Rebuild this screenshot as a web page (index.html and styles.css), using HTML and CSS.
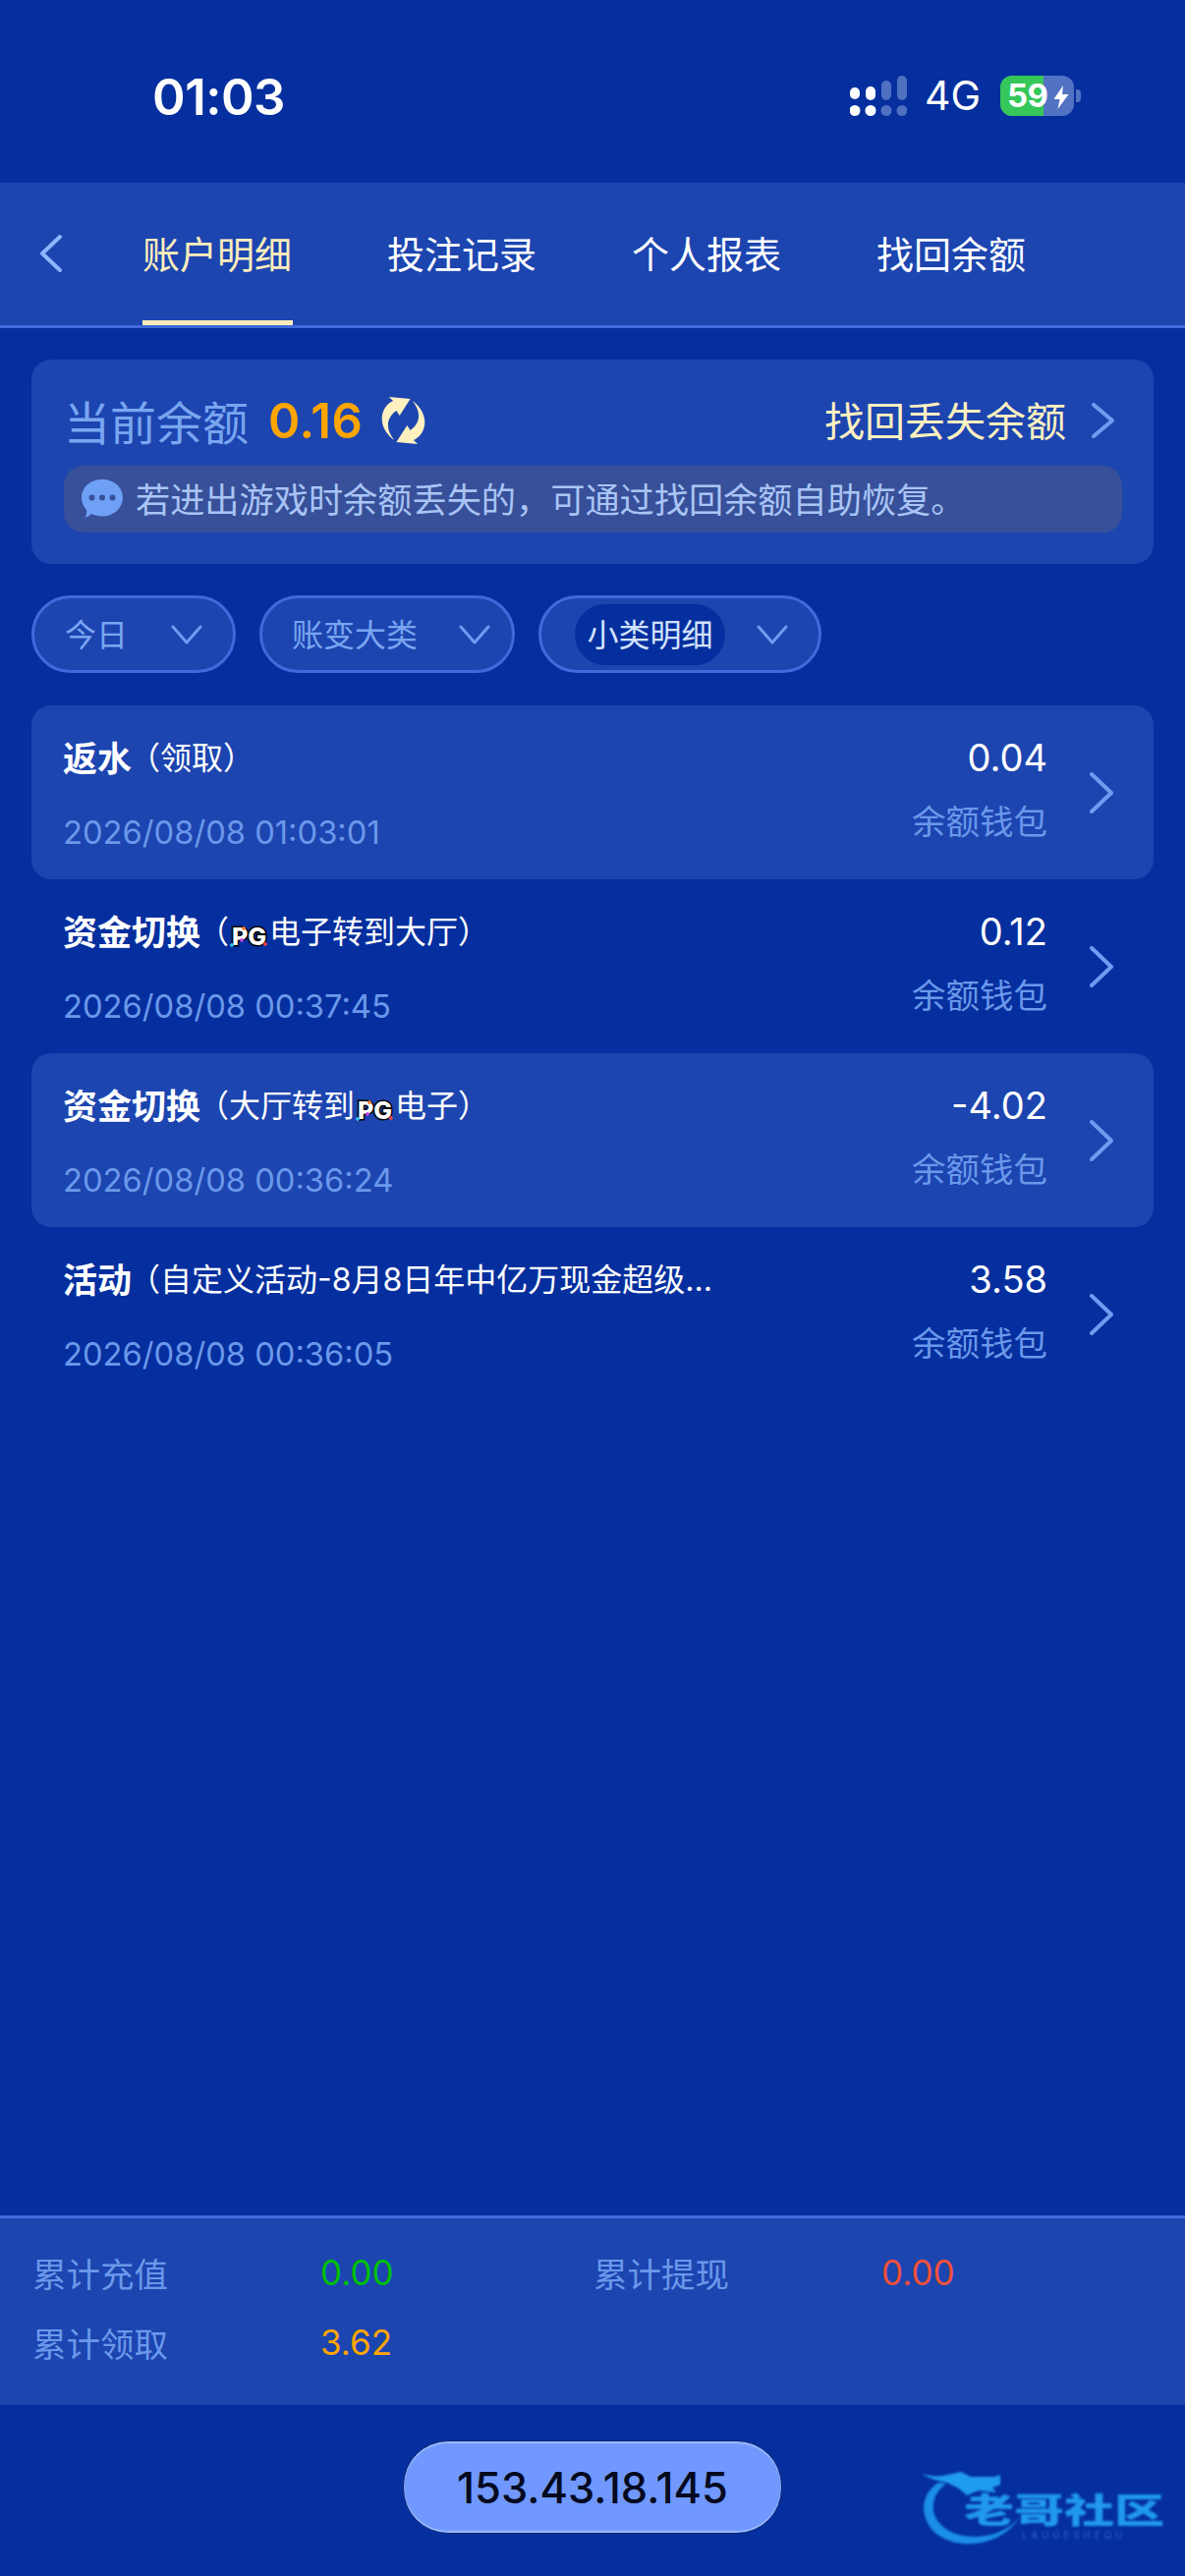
FILE: index.html
```html
<!DOCTYPE html>
<html lang="zh-CN">
<head>
  <meta charset="UTF-8" />
  <meta name="viewport" content="width=device-width, initial-scale=1.0" />
  <title>账户明细</title>
  <link rel="stylesheet" href="styles.css">
</head>
<body>
<div class="page">
  <div class="status-bar">
    <span class="time">01:03</span>
    <div class="status-right">
      <svg class="signal" width="58" height="41" viewBox="0 0 58 41">
        <rect x="0" y="12" width="10" height="12" rx="5" fill="#fff"/>
        <rect x="16" y="11" width="10" height="14" rx="5" fill="#fff"/>
        <rect x="32" y="5" width="10" height="20" rx="5" fill="#4f70c0"/>
        <rect x="48" y="0" width="10" height="25" rx="5" fill="#4f70c0"/>
        <circle cx="5" cy="35.5" r="5.5" fill="#fff"/>
        <circle cx="21" cy="35.5" r="5.5" fill="#fff"/>
        <circle cx="37" cy="35.5" r="5.5" fill="#4f70c0"/>
        <circle cx="53" cy="35.5" r="5.5" fill="#4f70c0"/>
      </svg>
      <span class="network">4G</span>
      <div class="battery">
        <div class="battery-fill"></div>
        <span class="battery-num">59</span>
        <svg class="bolt" width="16" height="24" viewBox="0 0 15 24">
          <path d="M9.5 0 L0 14 H6 L4 24 L15 9 H8.5 Z" fill="#fff"/>
        </svg>
      </div>
      <div class="battery-nub"></div>
    </div>
  </div>

  <div class="tabs">
    <svg class="back" width="23" height="38" viewBox="0 0 23 38">
      <path d="M21 2 L3 19 L21 36" fill="none" stroke="#8db6ff" stroke-width="4" stroke-linecap="round" stroke-linejoin="round"/>
    </svg>
    <div class="tab tab-active">账户明细</div>
    <div class="tab">投注记录</div>
    <div class="tab">个人报表</div>
    <div class="tab">找回余额</div>
  </div>

  <div class="content">
    <div class="balance-card">
      <div class="balance-head">
        <span class="balance-label">当前余额</span>
        <span class="balance-value">0.16</span>
        <svg class="refresh" width="47" height="48" viewBox="2 0 43 48" preserveAspectRatio="none">
          <path d="M14 4 C3 9 -3 29 15 44 C7 33 7 22 17 14 L20 19 L30 2 L10 0 Z" fill="#fff0c0"/>
          <path d="M14 4 C3 9 -3 29 15 44 C7 33 7 22 17 14 L20 19 L30 2 L10 0 Z" fill="#fff0c0" transform="rotate(180 23.5 24)"/>
        </svg>
        <span class="recover-link">找回丢失余额</span>
        <svg class="chevron" width="25" height="36" viewBox="0 0 25 36">
          <path d="M3 2 L22 18 L3 34" fill="none" stroke="#6e9cf0" stroke-width="4" stroke-linecap="round" stroke-linejoin="round"/>
        </svg>
      </div>
      <div class="notice">
        <svg class="chat" width="42" height="40" viewBox="0 0 42 40">
          <path d="M21 0 C33 0 42 8 42 18.5 C42 29 33 37.5 21 37.5 C17 37.5 13 36.5 10 35 C8 37 6 38.5 3.5 38.5 C5 36 5.5 33.5 5 31 C2 27.5 0 23.5 0 18.5 C0 8 9 0 21 0 Z" fill="#6ea0f5"/>
          <circle cx="10.5" cy="18.5" r="3" fill="#375099"/>
          <circle cx="21" cy="18.5" r="3" fill="#375099"/>
          <circle cx="31.5" cy="18.5" r="3" fill="#375099"/>
        </svg>
        <span>若进出游戏时余额丢失的，可通过找回余额自助恢复。</span>
      </div>
    </div>

    <div class="filters">
      <div class="filter filter-day">
        <span class="filter-text">今日</span>
        <svg width="32" height="20" viewBox="0 0 32 20"><path d="M2 2 L16 18 L30 2" fill="none" stroke="#6e9cf0" stroke-width="3" stroke-linecap="round" stroke-linejoin="round"/></svg>
      </div>
      <div class="filter filter-type">
        <span class="filter-text">账变大类</span>
        <svg width="32" height="20" viewBox="0 0 32 20"><path d="M2 2 L16 18 L30 2" fill="none" stroke="#6e9cf0" stroke-width="3" stroke-linecap="round" stroke-linejoin="round"/></svg>
      </div>
      <div class="filter filter-sub">
        <span class="filter-picked">小类明细</span>
        <svg width="32" height="20" viewBox="0 0 32 20"><path d="M2 2 L16 18 L30 2" fill="none" stroke="#6e9cf0" stroke-width="3" stroke-linecap="round" stroke-linejoin="round"/></svg>
      </div>
    </div>

    <div class="records">
      <div class="record record-alt">
        <div class="record-main">
          <div class="record-title"><b>返水</b><span class="record-note">（领取）</span></div>
          <div class="record-date">2026/08/08 01:03:01</div>
        </div>
        <div class="record-side">
          <div class="record-amount">0.04</div>
          <div class="record-wallet">余额钱包</div>
        </div>
        <svg class="chevron" width="24" height="42" viewBox="0 0 24 42"><path d="M2 2 L22 21 L2 40" fill="none" stroke="#6e9cf0" stroke-width="4" stroke-linecap="round" stroke-linejoin="round"/></svg>
      </div>
      <div class="record">
        <div class="record-main">
          <div class="record-title"><b>资金切换</b><span class="record-note">（<i class="pg">PG</i>电子转到大厅）</span></div>
          <div class="record-date">2026/08/08 00:37:45</div>
        </div>
        <div class="record-side">
          <div class="record-amount">0.12</div>
          <div class="record-wallet">余额钱包</div>
        </div>
        <svg class="chevron" width="24" height="42" viewBox="0 0 24 42"><path d="M2 2 L22 21 L2 40" fill="none" stroke="#6e9cf0" stroke-width="4" stroke-linecap="round" stroke-linejoin="round"/></svg>
      </div>
      <div class="record record-alt">
        <div class="record-main">
          <div class="record-title"><b>资金切换</b><span class="record-note">（大厅转到<i class="pg">PG</i>电子）</span></div>
          <div class="record-date">2026/08/08 00:36:24</div>
        </div>
        <div class="record-side">
          <div class="record-amount">-4.02</div>
          <div class="record-wallet">余额钱包</div>
        </div>
        <svg class="chevron" width="24" height="42" viewBox="0 0 24 42"><path d="M2 2 L22 21 L2 40" fill="none" stroke="#6e9cf0" stroke-width="4" stroke-linecap="round" stroke-linejoin="round"/></svg>
      </div>
      <div class="record">
        <div class="record-main">
          <div class="record-title"><b>活动</b><span class="record-note">（自定义活动-8月8日年中亿万现金超级...</span></div>
          <div class="record-date">2026/08/08 00:36:05</div>
        </div>
        <div class="record-side">
          <div class="record-amount">3.58</div>
          <div class="record-wallet">余额钱包</div>
        </div>
        <svg class="chevron" width="24" height="42" viewBox="0 0 24 42"><path d="M2 2 L22 21 L2 40" fill="none" stroke="#6e9cf0" stroke-width="4" stroke-linecap="round" stroke-linejoin="round"/></svg>
      </div>
    </div>
  </div>

  <div class="summary">
    <span class="summary-label">累计充值</span>
    <span class="summary-value green">0.00</span>
    <span class="summary-label">累计提现</span>
    <span class="summary-value red">0.00</span>
    <span class="summary-label">累计领取</span>
    <span class="summary-value orange">3.62</span>
  </div>

  <div class="bottom">
    <div class="ip-pill">153.43.18.145</div>
  </div>

  <div class="watermark">
    <svg class="watermark-art" width="248" height="78" viewBox="0 0 248 78">
      <path d="M17 14 C4 22 0 36 3 47 C8 68 30 78 54 76 C74 74 90 64 99 50 C88 62 72 69 54 69 C32 69 14 58 12 42 C11 32 15 22 25 15 Z" fill="#1a8ee8"/>
      <path d="M0 5 C10 8 18 8 26 6 L40 3 L50 8 L74 8 L80 6 L80 16 L72 19 L76 24 L58 22 L46 27 L38 20 L26 14 C16 12 8 10 0 5 Z" fill="#1f9bf0"/>
    </svg>
    <span class="watermark-name">老哥社区</span>
    <span class="watermark-sub">LAUGESHEQU</span>
  </div>
</div>
</body>
</html>
```

FILE: styles.css
```css
* {
  box-sizing: border-box;
}
html, body {
  margin: 0;
  padding: 0;
}
body {
  font-family: Inter, "Noto Sans CJK SC", sans-serif;
  background-color: #052f9e;
  color: #fff;
}
.page {
  position: relative;
  display: flex;
  flex-direction: column;
  width: 1206px;
  height: 2622px;
  overflow: hidden;
}

/* status bar */
.status-bar {
  display: flex;
  justify-content: space-between;
  height: 186px;
  padding: 0 106px 0 155px;
  flex-shrink: 0;
}
.time {
  font-size: 51px;
  font-weight: 600;
  line-height: 60px;
  margin-top: 69px;
  letter-spacing: -0.5px;
}
.status-right {
  display: flex;
  align-items: flex-start;
  padding-top: 77px;
}
.network {
  font-size: 41px;
  font-weight: 400;
  line-height: 41px;
  margin-left: 18px;
  margin-top: 0;
}
.battery {
  position: relative;
  display: flex;
  align-items: center;
  width: 75px;
  height: 41px;
  margin-left: 20px;
  border-radius: 12px;
  background: #5272c4;
  overflow: hidden;
}
.battery-fill {
  width: 44px;
  height: 100%;
  background: #35c759;
}
.battery-num {
  position: absolute;
  left: 7px;
  top: 0;
  font-size: 33px;
  line-height: 41px;
  font-weight: 700;
  letter-spacing: -0.5px;
}
.bolt {
  position: absolute;
  left: 54px;
  top: 10px;
}
.battery-nub {
  width: 5px;
  height: 13px;
  margin: 14px 0 0 2px;
  border-radius: 0 4px 4px 0;
  background: #5272c4;
}

/* tabs */
.tabs {
  display: flex;
  align-items: center;
  gap: 96px;
  height: 148px;
  padding-left: 145px;
  background: #1c45b0;
  border-bottom: 3px solid #4069dc;
  flex-shrink: 0;
  position: relative;
}
.back {
  position: absolute;
  left: 40px;
  top: 53px;
}
.tab {
  width: 153px;
  height: 145px;
  padding-top: 47px;
  font-size: 38px;
  line-height: 52px;
  white-space: nowrap;
  border-bottom: 5px solid transparent;
}
.tab-active {
  color: #ffeebb;
  border-bottom-color: #ffeebb;
}

/* balance card */
.content {
  flex: 1;
  padding: 32px 32px 0;
}
.balance-card {
  height: 208px;
  padding: 32px 32px 0 33px;
  background: #1c45b0;
  border-radius: 20px;
}
.balance-head {
  display: flex;
  align-items: center;
  height: 60px;
  padding: 0 7px 0 0;
}
.balance-label {
  font-size: 47px;
  color: #7aa5f0;
  margin-top: -2px;
}
.balance-value {
  margin-left: 20px;
  font-size: 49px;
  font-weight: 600;
  letter-spacing: 0.5px;
  color: #ffa500;
}
.refresh {
  margin-left: 18px;
}
.recover-link {
  margin-left: auto;
  margin-top: -5px;
  font-size: 41px;
  color: #fff0c0;
}
.balance-head .chevron {
  margin-left: 25px;
}
.notice {
  display: flex;
  align-items: center;
  height: 68px;
  margin-top: 16px;
  padding-left: 18px;
  border-radius: 20px;
  background: #375099;
  font-size: 35.2px;
  color: #a9c4f5;
}
.notice span {
  margin-top: -3px;
}
.chat {
  margin-right: 13px;
  flex-shrink: 0;
}

/* filters */
.filters {
  display: flex;
  gap: 24px;
  margin-top: 32px;
}
.filter {
  display: flex;
  align-items: center;
  justify-content: space-between;
  height: 79px;
  border: 3px solid #4069dc;
  border-radius: 40px;
  background: #1c45b0;
  font-size: 32px;
  color: #7aa5f0;
}
.filter-text {
  margin-top: -3px;
}
.filter-day {
  width: 208px;
  padding: 0 31px 0 31px;
}
.filter-type {
  width: 260px;
  padding: 0 22px 0 30px;
}
.filter-sub {
  width: 288px;
  padding: 0 31px 0 34px;
}
.filter-picked {
  display: flex;
  align-items: center;
  justify-content: center;
  width: 153px;
  height: 62px;
  padding-bottom: 3px;
  border-radius: 31px;
  background: #052f9e;
  color: #d3e2ff;
}

/* records */
.records {
  margin-top: 33px;
}
.record {
  display: flex;
  height: 177px;
  padding: 24px 0 0 32px;
  border-radius: 20px;
}
.record-alt {
  background: #1c45b0;
}
.record-main {
  flex: 1;
  min-width: 0;
}
.record-title {
  display: flex;
  align-items: center;
  height: 60px;
  padding-bottom: 6px;
  white-space: nowrap;
}
.record-title b {
  font-size: 35px;
  font-weight: 700;
}
.record-note {
  margin-left: -3px;
  font-size: 32px;
}
.pg {
  position: relative;
  display: inline-block;
  width: 41px;
  height: 22px;
  font-size: 25px;
  line-height: 22px;
  font-weight: 800;
  font-style: normal;
  color: #fff;
  -webkit-text-stroke: 3px #000;
  paint-order: stroke fill;
  vertical-align: -2px;
  text-align: center;
}
.pg::after {
  content: "";
  position: absolute;
  left: 0;
  top: 0;
  width: 41px;
  height: 22px;
  background-image:
    radial-gradient(circle at 15px 3px, #f08030 1.5px, transparent 2px),
    radial-gradient(circle at 3px 20px, #30c0f0 1.5px, transparent 2px),
    radial-gradient(circle at 13px 15px, #c040e0 1.5px, transparent 2px),
    radial-gradient(circle at 37px 19px, #f04040 1.5px, transparent 2px);
}
.record-date {
  margin-top: 15px;
  font-size: 32.7px;
  line-height: 60px;
  color: #6b98ea;
}
.record-side {
  text-align: right;
}
.record-amount {
  font-size: 38px;
  line-height: 58px;
}
.record-wallet {
  margin-top: 8px;
  font-size: 34.5px;
  line-height: 58px;
  color: #6b98ea;
}
.record .chevron {
  margin: 44px 41px 0 43px;
}

/* summary */
.summary {
  display: grid;
  grid-template-columns: 293px 278px 293px 1fr;
  grid-auto-rows: 71px;
  align-items: center;
  height: 193px;
  padding: 19px 0 0 33px;
  background: #1c45b0;
  border-top: 3px solid #4069dc;
  flex-shrink: 0;
}
.summary-label {
  font-size: 34.5px;
  color: #6b98ea;
}
.summary-value {
  font-size: 35px;
  padding-top: 1px;
}
.green {
  color: #00c000;
}
.red {
  color: #f0503a;
}
.orange {
  color: #ffa500;
}

/* bottom */
.bottom {
  display: flex;
  justify-content: center;
  height: 174px;
  padding-top: 36px;
  flex-shrink: 0;
}
.ip-pill {
  width: 386px;
  height: 95px;
  border-radius: 46px;
  background: #7098ff;
  border: 1px solid #0a2470;
  box-shadow: inset 0 2px 1px #9dbaff, inset 0 -2px 1px #9dbaff;
  color: #050a20;
  font-size: 43.5px;
  font-weight: 500;
  line-height: 95px;
  text-align: center;
}

/* watermark */
.watermark {
  position: absolute;
  left: 938px;
  top: 2513px;
  width: 248px;
  height: 78px;
  filter: blur(1px);
}
.watermark-art {
  display: block;
}
.watermark-name {
  position: absolute;
  left: 43px;
  top: 25px;
  font-size: 51px;
  line-height: 50px;
  font-weight: 900;
  color: #2098ee;
  white-space: nowrap;
  transform: scaleY(0.7);
  transform-origin: 0 0;
}
.watermark-sub {
  position: absolute;
  left: 102px;
  top: 62px;
  font-size: 10px;
  line-height: 10px;
  letter-spacing: 3.8px;
  color: #2c63c8;
  white-space: nowrap;
}
```
